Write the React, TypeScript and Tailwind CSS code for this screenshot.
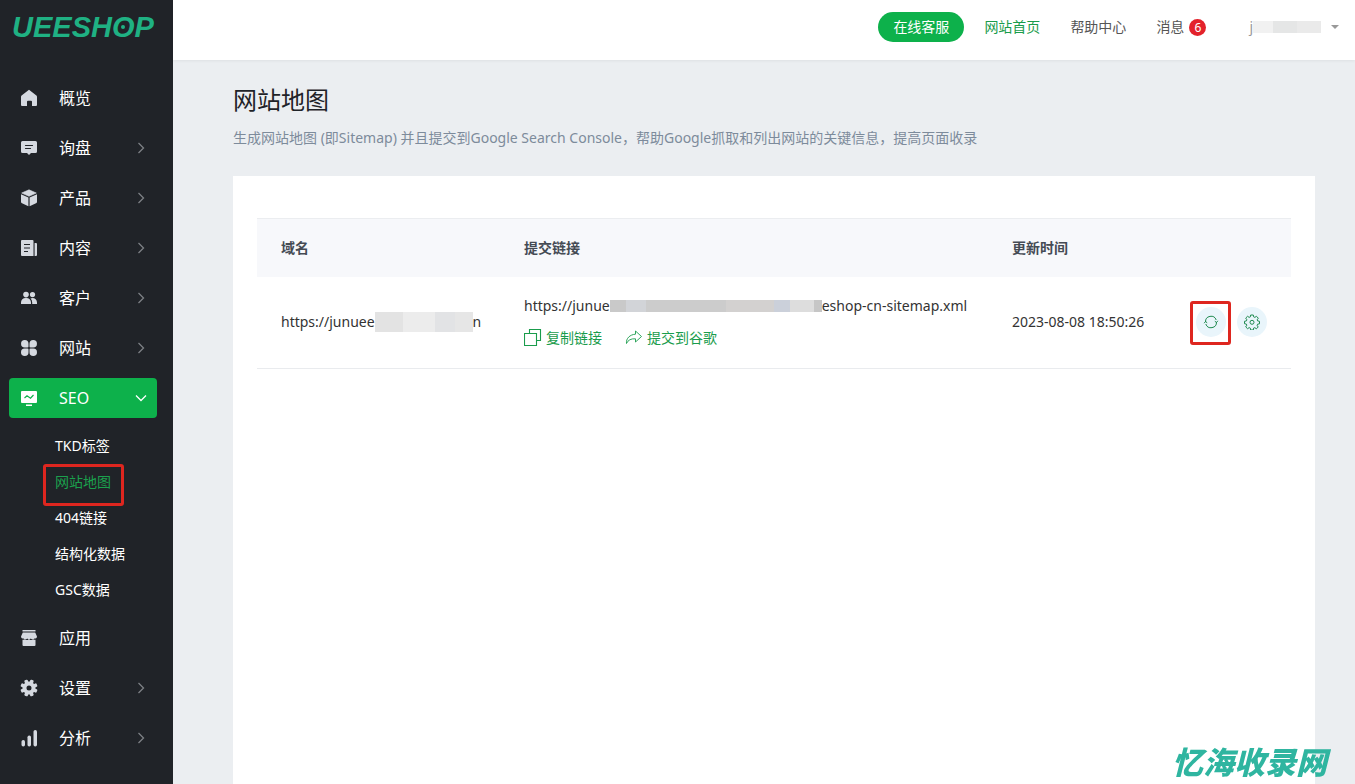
import type { ReactNode } from 'react';
import clsx from 'clsx';

const Svg = ({ children }: { children: ReactNode }) => (
  <svg viewBox="0 0 18 18" className="h-[18px] w-[18px] shrink-0" fill="currentColor" aria-hidden="true">
    {children}
  </svg>
);

const HomeIcon = () => (
  <Svg>
    <path d="M9 .8 16.4 6.6q.6.5.6 1.3V16a1 1 0 0 1-1 1h-4v-4.2a1 1 0 0 0-1-1H8a1 1 0 0 0-1 1V17H2a1 1 0 0 1-1-1V7.900q0-.8.6-1.300z" />
  </Svg>
);

const InquiryIcon = () => (
  <Svg>
    <path d="M2.500 2h13A1.500 1.500 0 0 1 17 3.500v9a1.500 1.500 0 0 1-1.500 1.500H11l-2 2-2-2H2.500A1.500 1.500 0 0 1 1 12.500v-9A1.500 1.500 0 0 1 2.500 2z" />
    <path d="M5.500 6.500h7M5.500 9.500h5" stroke="#202328" strokeWidth="1.2" strokeLinecap="round" />
  </Svg>
);

const ProductIcon = () => (
  <Svg>
    <path d="M9 .8 16.300 4 9 7.300 1.700 4z" stroke="currentColor" strokeWidth=".6" strokeLinejoin="round" />
    <path d="M1 5.200 8.400 8.600v8.600L2 14.200q-1-.5-1-1.500zM17 5.200 9.600 8.600v8.600l6.400-3q1-.5 1-1.500z" />
  </Svg>
);

const ContentIcon = () => (
  <Svg>
    <path d="M2 1h10.500a1 1 0 0 1 1 1v15H2a1 1 0 0 1-1-1V2a1 1 0 0 1 1-1zM14.600 4H16a1 1 0 0 1 1 1v11a1 1 0 0 1-1 1h-1.400z" />
    <path d="M4 5.500h6M4 9h6M4 12.500h4" stroke="#202328" strokeWidth="1.200" />
  </Svg>
);

const CustomerIcon = () => (
  <Svg>
    <circle cx="6" cy="5.600" r="2.800" />
    <circle cx="12.500" cy="5.600" r="2.600" />
    <path d="M1 15v-1.500A4.500 4.500 0 0 1 5.500 9h1a4.500 4.500 0 0 1 4.500 4.500V15zM10.500 9.400q.9-.4 2-.4a4.500 4.500 0 0 1 4.500 4.500V15h-4.800v-1.500q0-2.500-1.700-4.100z" />
  </Svg>
);

const SiteIcon = () => (
  <Svg>
    <path d="M4.800 1A3.800 3.800 0 0 1 8.500 4.800v2.700a1 1 0 0 1-1 1H4.800A3.750 3.750 0 0 1 4.800 1zM13.200 1a3.750 3.750 0 0 1 0 7.500h-2.700a1 1 0 0 1-1-1V4.800A3.800 3.800 0 0 1 13.200 1zM4.800 9.500h2.700a1 1 0 0 1 1 1v2.700a3.750 3.750 0 1 1-3.700-3.700zM10.500 9.500h2.700a3.750 3.750 0 1 1-3.700 3.700v-2.700a1 1 0 0 1 1-1z" />
  </Svg>
);

const SeoIcon = () => (
  <Svg>
    <path d="M2 2h14a1 1 0 0 1 1 1v10a1 1 0 0 1-1 1H2a1 1 0 0 1-1-1V3a1 1 0 0 1 1-1zM6 15.500h6V17H6z" />
    <path d="M4.500 9 7 6.800l3.500 2.400L13.500 6" fill="none" stroke="#0db14b" strokeWidth="1.200" />
  </Svg>
);

const AppIcon = () => (
  <Svg>
    <path d="M2.500 1h13v1.400h-13zM2.800 3.400h12.400L17 7.600a2 2 0 0 1-2.600 1.800 2.400 2.400 0 0 1-3.600 0 2.400 2.400 0 0 1-3.600 0 2.400 2.400 0 0 1-3.600 0A2 2 0 0 1 1 7.600zM2.500 10.800q1.200.2 2.200-.4 1.800 1 4.300 0 2.500 1 4.300 0 1 .6 2.200.4V16a1 1 0 0 1-1 1h-11a1 1 0 0 1-1-1z" />
  </Svg>
);

const SettingIcon = () => (
  <Svg>
    <circle cx="9" cy="9" r="4.500" fill="none" stroke="currentColor" strokeWidth="4" />
    {[0, 45, 90, 135, 180, 225, 270, 315].map((deg) => (
      <rect key={deg} x="7.200" y=".4" width="3.600" height="4" rx="1" transform={`rotate(${deg + 22.5} 9 9)`} />
    ))}
  </Svg>
);

const AnalysisIcon = () => (
  <Svg>
    <rect x="1.500" y="11" width="3.500" height="6.500" rx="1.700" />
    <rect x="7.500" y="6.500" width="3.500" height="11" rx="1.700" />
    <rect x="13.500" y="1" width="3.500" height="16.500" rx="1.700" />
  </Svg>
);

const Chevron = ({ open }: { open?: boolean }) => (
  <svg
    viewBox="0 0 12 12"
    className={clsx('h-3 w-3 shrink-0', open ? 'rotate-90 text-white' : 'text-[#7d8085]')}
    fill="none"
    stroke="currentColor"
    strokeWidth="1.300"
    aria-hidden="true"
  >
    <path d="M3.500 1 8.500 6l-5 5" />
  </svg>
);

const CopyIcon = () => (
  <svg viewBox="0 0 18 18" className="h-[18px] w-[18px]" fill="none" stroke="currentColor" aria-hidden="true">
    <path d="M5.500 4.500v-4h11v11h-4M.5 4.500h12v12H.5z" strokeWidth="1.100" />
  </svg>
);

const ShareIcon = () => (
  <svg viewBox="0 0 18 18" className="h-[18px] w-[18px]" fill="none" stroke="currentColor" aria-hidden="true">
    <path d="M10.500 2 16.500 7.500l-6 5.500V9.800C6 9.500 3 11 1.500 14.500.8 9.500 5 5.500 10.500 5.200z" strokeLinejoin="round" strokeWidth=".9" />
  </svg>
);

const RefreshIcon = () => (
  <svg viewBox="0 0 16 16" className="h-4 w-4" fill="none" stroke="currentColor" aria-hidden="true">
    <path d="M2.800 10a5.500 5.500 0 0 0 10.700-2M13.200 6A5.500 5.500 0 0 0 2.500 8M1.200 9.200l1.300-1.700 1.700 1.300M11.800 7.200l1.700 1.300 1.300-1.700" />
  </svg>
);

const GearIcon = () => (
  <svg viewBox="0 0 16 16" className="h-4 w-4" fill="none" stroke="currentColor" strokeLinejoin="round" aria-hidden="true">
    <path d="M6.700 1h2.600l.4 1.900 1.100.5 1.700-1.100 1.800 1.900-1.100 1.600.4 1.100 1.900.4v2.500l-1.900.4-.5 1.100 1.100 1.700-1.800 1.800-1.600-1.100-1.200.4-.3 1.900H6.700l-.4-1.900-1.100-.5-1.700 1.100-1.800-1.800 1.100-1.700-.4-1.100L.5 9.700V7.300l1.900-.4.500-1.100-1.200-1.700 1.800-1.800 1.700 1.100 1.100-.5z" />
    <circle cx="8" cy="8.300" r="2" />
  </svg>
);

const navItems = [
  { label: '概览', icon: HomeIcon },
  { label: '询盘', icon: InquiryIcon, more: true },
  { label: '产品', icon: ProductIcon, more: true },
  { label: '内容', icon: ContentIcon, more: true },
  { label: '客户', icon: CustomerIcon, more: true },
  { label: '网站', icon: SiteIcon, more: true },
  {
    label: 'SEO',
    icon: SeoIcon,
    more: true,
    children: ['TKD标签', '网站地图', '404链接', '结构化数据', 'GSC数据'],
  },
  { label: '应用', icon: AppIcon },
  { label: '设置', icon: SettingIcon, more: true },
  { label: '分析', icon: AnalysisIcon, more: true },
];

function Sidebar() {
  return (
    <aside className="w-[173px] shrink-0 bg-[#202328] text-white">
      <a href="#" className="block h-[78px] pl-3 pt-[7px] font-['Liberation_Sans',sans-serif] text-[29px] leading-10 font-bold italic text-[#1fb183]">
        UEESH
        <span className="relative">
          O
          <i className="absolute top-1/2 left-1/2 h-1 w-1 -translate-x-1/2 -translate-y-1/2 rounded-full bg-[#1fb183]" />
        </span>
        P
      </a>
      <nav>
        <ul className="flex flex-col gap-2.5 pr-4 pl-[9px]">
          {navItems.map((item) => (
            <li key={item.label}>
              <a
                href="#"
                className={clsx(
                  'flex h-10 items-center rounded pr-2.5 pl-[11px]',
                  item.children ? 'bg-[#0db14b] text-white' : 'text-[#d5d9e0]'
                )}
              >
                <item.icon />
                <span className="ml-[21px] flex-1 text-base text-white">{item.label}</span>
                {item.more && <Chevron open={!!item.children} />}
              </a>
              {item.children && (
                <ul className="pt-2.5 pl-[46px] text-sm">
                  {item.children.map((child) => {
                    const active = child === '网站地图';
                    return (
                      <li key={child} className="relative h-9 leading-9">
                        <a href="#" className={active ? 'text-[#1ba04d]' : 'text-white'}>
                          {child}
                        </a>
                        {active && (
                          <span className="pointer-events-none absolute top-0 -left-3 h-[42px] w-[81px] rounded-[3px] border-3 border-[#de261f]" />
                        )}
                      </li>
                    );
                  })}
                </ul>
              )}
            </li>
          ))}
        </ul>
      </nav>
    </aside>
  );
}

function Header() {
  return (
    <header className="z-10 flex h-[60px] items-center justify-end bg-white pr-4 pb-1.5 text-sm text-[#555] shadow-[0_1px_3px_rgba(0,0,0,0.06)]">
      <button className="h-[30px] rounded-full bg-[#0db14b] px-[15px] text-white">在线客服</button>
      <a href="#" className="ml-5 text-[#1a9c4c]">网站首页</a>
      <a href="#" className="ml-[30px]">帮助中心</a>
      <a href="#" className="ml-[30px] flex items-center gap-[5px]">
        消息
        <span className="h-[17px] w-[17px] rounded-full bg-[#e3222b] text-center text-xs leading-[17px] text-white">6</span>
      </a>
      <button className="ml-[43px] flex items-center text-[#999]">
        j
        <span className="flex h-3">
          <i className="w-5 bg-[#f1f1f1]" />
          <i className="w-6 bg-[#e5e6e6]" />
          <i className="w-6 bg-[#eaeaea]" />
        </span>
        <i className="ml-2.5 border-x-4 border-t-4 border-x-transparent border-t-[#999]" />
      </button>
    </header>
  );
}

function SitemapTable() {
  return (
    <table className="w-full table-fixed text-left text-sm text-[#333]">
      <colgroup>
        <col className="w-[243px]" />
        <col className="w-[488px]" />
        <col className="w-[178px]" />
        <col />
      </colgroup>
      <thead>
        <tr className="h-[58px] border-t border-[#ebedf0] bg-[#f7f8fb] text-[#454b54]">
          <th className="px-6 font-bold">域名</th>
          <th className="px-6 font-bold">提交链接</th>
          <th className="px-6 font-bold">更新时间</th>
          <th aria-label="操作" />
        </tr>
      </thead>
      <tbody>
        <tr className="h-[92px] border-b border-[#e9ebee]">
          <td className="pl-6">
            <div className="flex items-center">
              https://junuee
              <span className="flex h-5">
                <i className="w-7 bg-[#e3e3e3]" />
                <i className="w-8 bg-[#ececec]" />
                <i className="w-5 bg-[#e2e3e5]" />
                <i className="w-[18px] bg-[#e6e6e6]" />
              </span>
              n
            </div>
          </td>
          <td className="pl-6">
            <div className="flex h-8 items-center">
              https://junue
              <span className="flex h-3">
                <i className="w-4 bg-[#c9c9c9]" />
                <i className="w-5 bg-[#d2d4d8]" />
                <i className="w-20 bg-[#cccccc]" />
                <i className="w-12 bg-[#d3d1d0]" />
                <i className="w-4 bg-[#cbd0da]" />
                <i className="w-6 bg-[#dddddd]" />
                <i className="w-2 bg-[#c6c6c6]" />
              </span>
              eshop-cn-sitemap.xml
            </div>
            <div className="flex h-8 items-center gap-[23px] text-[#1a9c4c]">
              <button className="flex items-center gap-1">
                <CopyIcon />
                复制链接
              </button>
              <button className="flex items-center gap-1">
                <ShareIcon />
                提交到谷歌
              </button>
            </div>
          </td>
          <td className="pl-6 whitespace-nowrap">2023-08-08 18:50:26</td>
          <td>
            <div className="flex items-center gap-[11px] pl-[30px] text-[#1f8a4f]">
              <button aria-label="刷新" className="relative flex h-[30px] w-[30px] items-center justify-center rounded-full bg-[#e9f5fb]">
                <RefreshIcon />
                <span className="pointer-events-none absolute -top-1.5 -left-1.5 h-11 w-[41px] rounded-[3px] border-3 border-[#de261f]" />
              </button>
              <button aria-label="设置" className="flex h-[30px] w-[30px] items-center justify-center rounded-full bg-[#e9f5fb]">
                <GearIcon />
              </button>
            </div>
          </td>
        </tr>
      </tbody>
    </table>
  );
}

export default function App() {
  return (
    <div className="flex min-h-screen bg-[#ebeef1] font-['Noto_Sans','Noto_Sans_CJK_SC',sans-serif]">
      <Sidebar />
      <div className="flex min-w-0 flex-1 flex-col">
        <Header />
        <main className="flex flex-1 flex-col pt-6 pr-10 pl-[60px]">
          <h1 className="text-2xl text-[#1f2328]">网站地图</h1>
          <p className="mt-3 text-sm text-[#7d8b9b]">
            生成网站地图 (即Sitemap) 并且提交到Google Search Console，帮助Google抓取和列出网站的关键信息，提高页面收录
          </p>
          <section className="mt-7 flex-1 bg-white px-6 pt-[42px]">
            <SitemapTable />
          </section>
        </main>
      </div>
      <div className="pointer-events-none fixed right-7 bottom-1 text-[31px] leading-9 font-black text-[#2fb5a0] italic">
        忆海收录网
      </div>
    </div>
  );
}
